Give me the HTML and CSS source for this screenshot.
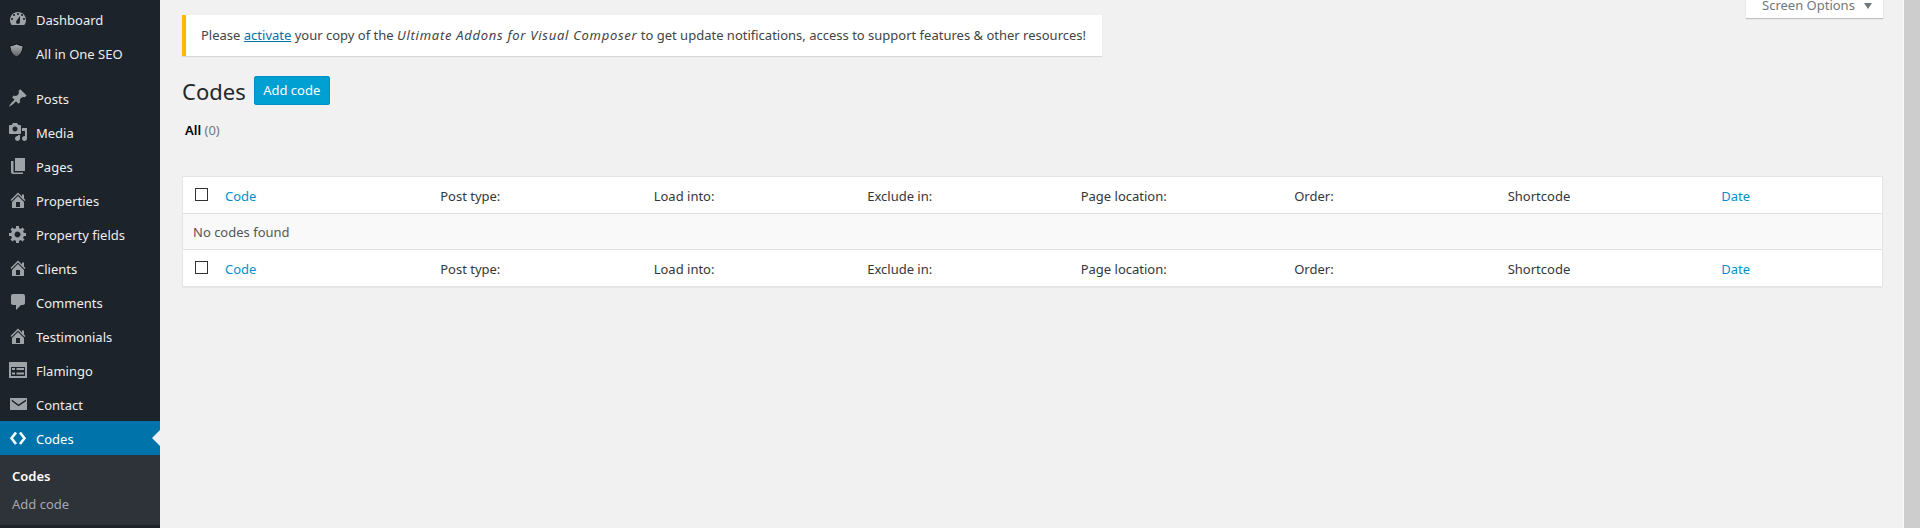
FILE: index.html
```html
<!DOCTYPE html>
<html lang="en">
<head>
    <meta charset="UTF-8">
    <meta name="viewport" content="width=device-width, initial-scale=1.0">
    <title>Codes</title>
    <link rel="stylesheet" href="styles.css">
</head>
<body>
    <div class="page">
        <nav class="sidebar">
            <ul class="menu">
                <li class="menu-item">
                    <svg class="menu-icon" viewBox="0 0 20 20"><path fill-rule="evenodd" d="M3.760 16h12.480c1.100-1.370 1.760-3.110 1.760-5 0-4.420-3.580-8-8-8s-8 3.580-8 8c0 1.890.66 3.630 1.760 5zM10 4c.55 0 1 .45 1 1s-.45 1-1 1-1-.45-1-1 .45-1 1-1zM6 5c.55 0 1 .45 1 1s-.45 1-1 1-1-.45-1-1 .45-1 1-1zm8 0c.55 0 1 .45 1 1s-.45 1-1 1-1-.45-1-1 .45-1 1-1zm-5.370 6.550L12 7v6c0 1.100-.9 2-2 2s-2-.9-2-2c0-.57.24-1.080.63-1.450zM4 9c.55 0 1 .45 1 1s-.45 1-1 1-1-.45-1-1 .45-1 1-1zm12 0c.55 0 1 .45 1 1s-.45 1-1 1-1-.45-1-1 .45-1 1-1z"/></svg>
                    <span>Dashboard</span>
                </li>
                <li class="menu-item">
                    <svg class="menu-icon" viewBox="0 0 20 20"><defs><linearGradient id="shield" x1="0" y1="0" x2="0" y2="1"><stop offset="0" stop-color="#aeb1b3"/><stop offset="1" stop-color="#5e6266"/></linearGradient></defs><path fill="url(#shield)" stroke="#101418" stroke-width="1" d="M8.500 1C10.500 2 13 2.600 15 2.700c0 4.500-1.500 8.500-6.500 11.300C3.500 11.200 2 7.200 2 2.700 4 2.600 6.500 2 8.500 1z"/></svg>
                    <span>All in One SEO</span>
                </li>
                <li class="menu-sep"></li>
                <li class="menu-item">
                    <svg class="menu-icon" viewBox="0 0 20 20"><path d="M10.440 3.020l1.820-1.820 6.360 6.350-1.830 1.820c-1.050-.68-2.480-.57-3.410.36l-.75.75c-.92.93-1.040 2.350-.35 3.410l-1.830 1.820-2.410-2.410-2.800 2.790c-.42.42-3.380 2.710-3.800 2.290s1.860-3.390 2.280-3.810l2.790-2.790L4.100 9.360l1.830-1.820c1.050.69 2.480.57 3.400-.36l.75-.75c.93-.92 1.050-2.350.36-3.410z"/></svg>
                    <span>Posts</span>
                </li>
                <li class="menu-item">
                    <svg class="menu-icon" viewBox="0 0 20 20"><path fill-rule="evenodd" d="M13 11V4c0-.55-.45-1-1-1h-1.670L9 1H5L3.670 3H2c-.55 0-1 .45-1 1v7c0 .55.45 1 1 1h10c.55 0 1-.45 1-1zM7 4.500c1.380 0 2.500 1.120 2.500 2.500S8.380 9.500 7 9.500 4.500 8.380 4.500 7 5.620 4.500 7 4.500zM14 6h5v10.500c0 1.380-1.120 2.500-2.500 2.500S14 17.880 14 16.500s1.120-2.500 2.500-2.500c.17 0 .34.02.5.05V9h-3V6zm-4 8.050V13h2v3.500c0 1.380-1.120 2.500-2.500 2.500S7 17.880 7 16.500 8.120 14 9.500 14c.17 0 .34.02.5.05z"/></svg>
                    <span>Media</span>
                </li>
                <li class="menu-item">
                    <svg class="menu-icon" viewBox="0 0 20 20"><path d="M7 2h10v13H7z"/><path d="M3 5h2.500v11.500H15V18H5c-1.100 0-2-.9-2-2z"/></svg>
                    <span>Pages</span>
                </li>
                <li class="menu-item">
                    <svg class="menu-icon" viewBox="0 0 20 20"><use href="#icon-home"/></svg>
                    <span>Properties</span>
                </li>
                <li class="menu-item">
                    <svg class="menu-icon" viewBox="0 0 20 20"><path fill-rule="evenodd" d="M18 12h-2.180c-.17.7-.44 1.350-.81 1.930l1.540 1.540-2.100 2.100-1.540-1.540c-.58.36-1.230.63-1.910.79V19H8v-2.180c-.68-.16-1.330-.43-1.910-.79l-1.540 1.540-2.120-2.120 1.540-1.540c-.36-.58-.63-1.230-.79-1.910H1V9.030h2.170c.16-.7.44-1.350.8-1.940L2.430 5.550l2.100-2.100 1.540 1.540c.58-.37 1.240-.64 1.930-.81V2h3v2.180c.68.16 1.330.43 1.910.79l1.540-1.540 2.120 2.120-1.540 1.540c.36.59.64 1.240.8 1.940H18V12zm-8.500 1.500c1.660 0 3-1.340 3-3s-1.340-3-3-3-3 1.340-3 3 1.340 3 3 3z"/></svg>
                    <span>Property fields</span>
                </li>
                <li class="menu-item">
                    <svg class="menu-icon" viewBox="0 0 20 20"><use href="#icon-home"/></svg>
                    <span>Clients</span>
                </li>
                <li class="menu-item">
                    <svg class="menu-icon" viewBox="0 0 20 20"><path d="M5 2h10c1.100 0 2 .9 2 2v7c0 1.100-.9 2-2 2h-2l-5 5v-5H5c-1.100 0-2-.9-2-2V4c0-1.100.9-2 2-2z"/></svg>
                    <span>Comments</span>
                </li>
                <li class="menu-item">
                    <svg class="menu-icon" viewBox="0 0 20 20"><use href="#icon-home"/></svg>
                    <span>Testimonials</span>
                </li>
                <li class="menu-item">
                    <svg class="menu-icon" viewBox="0 0 20 20"><path fill-rule="evenodd" d="M1 2h18v16H1zM3 7v9h14V7zM4 8h3v2H4zm4.500 0H16v2H8.500zM4 12.500h3v2H4zm4.500 0H16v2H8.500z"/></svg>
                    <span>Flamingo</span>
                </li>
                <li class="menu-item">
                    <svg class="menu-icon" viewBox="0 0 20 20"><path fill-rule="evenodd" d="M2 4h17v12H2zM3.700 5.600l6.800 5 7.500-5v1.700l-7.500 5-6.800-5z"/></svg>
                    <span>Contact</span>
                </li>
                <li class="menu-item is-current">
                    <svg class="menu-icon" viewBox="0 0 20 20"><path class="code-mark" d="M8 4.500l-4.500 5.800L8 16M12 4.500l4.500 5.800L12 16"/></svg>
                    <span>Codes</span>
                </li>
            </ul>
            <ul class="submenu">
                <li class="submenu-item is-current">Codes</li>
                <li class="submenu-item">Add code</li>
            </ul>
        </nav>

        <main class="content">
            <div class="screen-tab">Screen Options <span class="screen-arrow"></span></div>

            <div class="notice">Please <a href="#">activate</a> your copy of the <em>Ultimate Addons for Visual Composer</em> to get update notifications, access to support features &amp; other resources!</div>

            <div class="title-row">
                <h1>Codes</h1>
                <a class="add-button" href="#">Add code</a>
            </div>

            <div class="filters"><strong>All</strong> <span>(0)</span></div>

            <table class="codes-table">
                <colgroup>
                    <col class="col-check">
                    <col class="col-code">
                    <col class="col-data">
                    <col class="col-data">
                    <col class="col-data">
                    <col class="col-data">
                    <col class="col-data">
                    <col class="col-data">
                    <col>
                </colgroup>
                <thead>
                    <tr>
                        <th class="check-cell"><span class="checkbox"></span></th>
                        <th><a href="#">Code</a></th>
                        <th>Post type:</th>
                        <th>Load into:</th>
                        <th>Exclude in:</th>
                        <th>Page location:</th>
                        <th>Order:</th>
                        <th>Shortcode</th>
                        <th><a href="#">Date</a></th>
                    </tr>
                </thead>
                <tbody>
                    <tr>
                        <td colspan="9">No codes found</td>
                    </tr>
                </tbody>
                <tfoot>
                    <tr>
                        <th class="check-cell"><span class="checkbox"></span></th>
                        <th><a href="#">Code</a></th>
                        <th>Post type:</th>
                        <th>Load into:</th>
                        <th>Exclude in:</th>
                        <th>Page location:</th>
                        <th>Order:</th>
                        <th>Shortcode</th>
                        <th><a href="#">Date</a></th>
                    </tr>
                </tfoot>
            </table>
        </main>

        <div class="scrollbar"></div>
    </div>

    <svg class="icon-defs" width="0" height="0">
        <symbol id="icon-home" viewBox="0 0 20 20"><path fill-rule="evenodd" d="M16 8.500l1.530 1.530-1.060 1.060L10 4.620l-6.470 6.470-1.060-1.060L10 2.500l4 4v-2h2v4zm-6-2.460l6 5.990V18H4v-5.970zM12 17v-5H8v5h4z"/></symbol>
    </svg>
</body>
</html>
```

FILE: styles.css
```css
* { margin: 0; padding: 0; box-sizing: border-box; }
body {
    font-family: "Noto Sans", "Open Sans", sans-serif;
    font-size: 13px;
    color: #444;
    background: #f1f1f1;
    height: 528px;
    overflow: hidden;
}
a { color: #0073aa; }
ul { list-style: none; }
.icon-defs { position: absolute; }

.page {
    display: flex;
    height: 528px;
}

/* left admin menu */
.sidebar {
    width: 160px;
    flex-shrink: 0;
    background: #1c232b;
    color: #eee;
    padding-top: 2px;
}
.menu-item {
    display: flex;
    align-items: center;
    height: 34px;
    padding-left: 8px;
    gap: 8px;
    position: relative;
}
.menu-item span { padding-top: 2px; }
.menu-icon {
    width: 20px;
    height: 20px;
    fill: #9ea3a8;
    flex-shrink: 0;
}
.menu-sep { height: 11px; }
.menu-item.is-current {
    background: #0073aa;
    color: #fff;
}
.menu-item.is-current::after {
    content: '';
    position: absolute;
    right: 0;
    top: 9px;
    border: 8px solid transparent;
    border-right-color: #f1f1f1;
    border-left-width: 0;
}
.code-mark {
    fill: none;
    stroke: #fff;
    stroke-width: 2.6;
}
.submenu {
    background: #2d3339;
    height: 70px;
    padding-top: 7px;
}
.submenu-item {
    height: 28px;
    line-height: 28px;
    padding-left: 12px;
    color: #a5a9ad;
}
.submenu-item.is-current {
    color: #fff;
    font-weight: 600;
}

/* main column */
.content {
    flex: 1;
    min-width: 0;
    padding: 15px 20px 0 22px;
    position: relative;
}
.screen-tab {
    position: absolute;
    top: 0;
    right: 20px;
    width: 137px;
    height: 18px;
    line-height: 11px;
    padding-left: 16px;
    background: #fff;
    color: #72777c;
    box-shadow: 0 1px 1px rgba(0,0,0,0.2);
    overflow: hidden;
}
.screen-arrow {
    display: inline-block;
    margin-left: 6px;
    border-top: 6px solid #72777c;
    border-left: 4px solid transparent;
    border-right: 4px solid transparent;
    vertical-align: 1px;
}
.notice {
    display: inline-block;
    height: 41px;
    line-height: 41px;
    padding: 0 15px;
    width: 920px;
    white-space: nowrap;
    background: #fff;
    border-left: 4px solid #ffb900;
    box-shadow: 0 1px 1px rgba(0,0,0,0.1);
    vertical-align: top;
}
.notice em { letter-spacing: 0.72px; }
.title-row {
    display: flex;
    align-items: center;
    gap: 8px;
    margin-top: 20px;
    height: 29px;
}
h1 {
    font-size: 22px;
    font-weight: 400;
    color: #23282d;
}
.add-button {
    height: 29px;
    line-height: 27px;
    width: 76px;
    text-align: center;
    background: #00a0d2;
    border: 1px solid #0091c4;
    border-radius: 2px;
    color: #fff;
    text-decoration: none;
}
.filters {
    margin-top: 15px;
    height: 20px;
    line-height: 20px;
    padding-left: 3px;
    color: #72777c;
}
.filters strong {
    color: #000;
    font-weight: 600;
}

/* list table */
.codes-table {
    margin-top: 36px;
    width: 100%;
    table-layout: fixed;
    border-collapse: separate;
    border-spacing: 0;
    background: #fff;
    border: 1px solid #e5e5e5;
    box-shadow: 0 1px 1px rgba(0,0,0,0.04);
}
.col-check { width: 32px; }
.col-code { width: 215.2px; }
.col-data { width: 213.5px; }
.codes-table th, .codes-table td {
    height: 37px;
    padding: 1px 10px 0;
    font-weight: 400;
    text-align: left;
    color: #32373c;
}
.codes-table th a {
    color: #0091cd;
    text-decoration: none;
}
.codes-table thead th { border-bottom: 1px solid #e1e1e1; }
.codes-table tfoot th { border-top: 1px solid #e1e1e1; }
.codes-table td {
    height: 35px;
    background: #f9f9f9;
    color: #555;
}
.codes-table .check-cell {
    padding: 0 0 1px 12px;
}
.checkbox {
    display: block;
    width: 13px;
    height: 13px;
    border: 1px solid #333;
}

.scrollbar {
    width: 17px;
    flex-shrink: 0;
    background: #cdcdcd;
    border-left: 1px solid #f9f9f9;
}
```
